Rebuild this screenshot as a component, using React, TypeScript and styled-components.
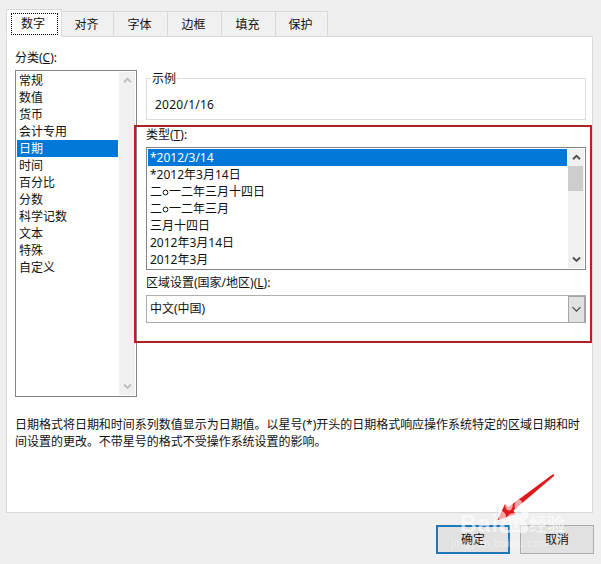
import React from "react";
import styled, { createGlobalStyle, css } from "styled-components";

const GlobalStyle = createGlobalStyle`
  * { box-sizing: border-box; }
  body {
    margin: 0;
    background: #efefef;
    color: #111;
    font: 12px/17px "Noto Sans", "Noto Sans CJK SC", sans-serif;
    white-space: nowrap;
  }
`;

const Dialog = styled.main`
  position: relative;
  width: 601px;
  height: 564px;
  padding: 9px 0 0 6px;
  overflow: hidden;
  background: #efefef;
`;

const TabBar = styled.nav`
  display: flex;
  align-items: flex-end;
  height: 28px;
`;

const Tab = styled.div<{ $active?: boolean; $width: number }>`
  display: flex;
  align-items: center;
  justify-content: center;
  width: ${(p) => p.$width}px;
  height: 26px;
  padding-right: 2px;
  border: 1px solid #d9d9d9;
  border-left: 0;
  background: #f0f0f0;
  ${(p) =>
    p.$active &&
    css`
      height: 28px;
      padding: 3px 3px 2px;
      border-left: 1px solid #d9d9d9;
      border-bottom-color: #fff;
      background: #fff;
      z-index: 1;
    `}
`;

const FocusRing = styled.span`
  display: flex;
  align-items: center;
  justify-content: center;
  width: 47px;
  height: 22px;
  padding-right: 2px;
  border: 1px dotted #000;
`;

const Page = styled.section`
  width: 587px;
  height: 477px;
  margin-top: -1px;
  padding: 12px 6px 0 8px;
  border: 1px solid #d9d9d9;
  background: #fff;
`;

const Columns = styled.div`
  display: flex;
  gap: 9px;
`;

const CategoryColumn = styled.div`
  width: 122px;
`;

const DetailColumn = styled.div`
  width: 440px;
  padding-top: 21px;
`;

const Label = styled.div<{ $height: number; $top?: number }>`
  height: ${(p) => p.$height}px;
  padding-top: ${(p) => p.$top ?? 0}px;
`;

const ListBox = styled.div<{ $height: number }>`
  display: flex;
  height: ${(p) => p.$height}px;
  padding: 1px;
  border: 1px solid #7f858b;
  background: #fff;
`;

const Options = styled.div`
  flex: 1;
  margin-right: 1px;
`;

const Option = styled.div<{ $selected?: boolean }>`
  height: 17px;
  padding-left: 2px;
  line-height: 17px;
  ${(p) => p.$selected && "background: #0078d7; color: #fff;"}
`;

const ScrollBar = styled.div`
  display: flex;
  flex-direction: column;
  width: 16px;
  background: #f0f0f0;
`;

const ScrollButton = styled.span`
  display: flex;
  align-items: center;
  justify-content: center;
  height: 17px;
`;

const Track = styled.div`
  flex: 1;
`;

const Thumb = styled.div`
  width: 15px;
  height: 25px;
  background: #cdcdcd;
`;

const SampleBox = styled.fieldset`
  height: 50px;
  margin: 0 0 6px;
  padding: 9px 8px 0;
  min-width: 0;
  border: 1px solid #dcdcdc;
  legend {
    height: 17px;
    margin-left: -4px;
    padding: 0 1px;
  }
`;

const SampleValue = styled.span`
  letter-spacing: 0.25px;
`;

const Combo = styled.div`
  display: flex;
  align-items: center;
  justify-content: space-between;
  height: 28px;
  padding-left: 3px;
  border: 1px solid #adadad;
`;

const ComboText = styled.span`
  padding-bottom: 1px;
`;

const ComboButton = styled.span`
  display: flex;
  align-items: center;
  justify-content: center;
  width: 18px;
  height: 27px;
  margin-right: -1px;
  border: 1px solid #a6a6a6;
  border-right-width: 2px;
  background: #e1e1e1;
`;

const Description = styled.p`
  margin: 19px 0 0;
  letter-spacing: -0.02px;
`;

const Footer = styled.footer`
  display: flex;
  justify-content: flex-end;
  gap: 10px;
  padding: 12px 7px 0 0;
`;

const Button = styled.button<{ $primary?: boolean }>`
  width: 74px;
  height: 29px;
  padding: 0;
  border: ${(p) => (p.$primary ? "2px solid #1b78b9" : "1px solid #adadad")};
  background: #e1e1e1;
  color: #111;
  font: inherit;
`;

const Highlight = styled.div`
  position: absolute;
  left: 134px;
  top: 125px;
  width: 458px;
  height: 218px;
  border: 2px solid #c91a1d;
  border-top-color: #b32023;
  border-bottom-color: #b32023;
`;

const Overlay = styled.svg`
  position: absolute;
  left: 440px;
  top: 465px;
  pointer-events: none;
`;

const BrandText = styled.text`
  font-family: "Liberation Sans", sans-serif;
  font-weight: 700;
  font-size: 23px;
`;

const BrandCjk = styled.text`
  font-family: "Noto Sans CJK SC", sans-serif;
  font-weight: 500;
  font-size: 18px;
`;

const BrandUrl = styled.text`
  font-family: "Liberation Sans", sans-serif;
  font-size: 11.5px;
`;

const Chevron = ({ up, color, thin }: { up?: boolean; color: string; thin?: boolean }) => (
  <svg width="9" height="7" viewBox="0 0 9 7" fill="none">
    <path
      d={up ? "M1 5.2 4.5 1.9 8 5.2" : thin ? "M.5 1.2 4.5 5.2 8.5 1.2" : "M1 1.5 4.5 5 8 1.5"}
      stroke={color}
      strokeWidth={thin ? 1.1 : 1.9}
    />
  </svg>
);

const Scroller = ({ color, thumb }: { color: string; thumb?: boolean }) => (
  <ScrollBar>
    <ScrollButton><Chevron up color={color} /></ScrollButton>
    <Track>{thumb && <Thumb />}</Track>
    <ScrollButton><Chevron color={color} /></ScrollButton>
  </ScrollBar>
);

const tabs: [string, number][] = [
  ["对齐", 52], ["字体", 54], ["边框", 54], ["填充", 54], ["保护", 52],
];
const categories = [
  "常规", "数值", "货币", "会计专用", "日期", "时间",
  "百分比", "分数", "科学记数", "文本", "特殊", "自定义",
];
const formats = [
  "*2012/3/14", "*2012年3月14日", "二○一二年三月十四日", "二○一二年三月",
  "三月十四日", "2012年3月14日", "2012年3月",
];

const Circle = styled.svg`
  display: inline-block;
  width: 7px;
  height: 12px;
  vertical-align: -2px;
`;

const FormatText = ({ text }: { text: string }) => (
  <span>
    {text.split("○").map((part, i) => (
      <React.Fragment key={i}>
        {i > 0 && (
          <Circle viewBox="0 0 7 12" aria-label="○">
            <circle cx="3.5" cy="6.5" r="2.4" fill="none" stroke="currentColor" />
          </Circle>
        )}
        {part}
      </React.Fragment>
    ))}
  </span>
);

const Arrow = () => (
  <path
    d="M497.5 520 505 504 508.5 507 552.5 474.5Q555 473.5 554 476L513.5 510.5 515.5 514.5Z"
    fill="#e01a1c"
  />
);

const Watermark = () => (
  <g fill="#fff" opacity="0.62">
    <BrandText x="460" y="532" textLength="38">Bai</BrandText>
    <path
      fillRule="evenodd"
      d="M514 513C508 513 506 519 502 523 497 528 500 534 507 533 512 532 516 532 521 533 528 534 530 528 526 523 522 519 520 513 514 513ZM507 521H509.500V530H504.500V523.500H507ZM512 523.500H514.500V528H517.500V523.500H520V530H512Z"
    />
    <ellipse cx="502" cy="516" rx="3.800" ry="5" transform="rotate(-18 502 516)" />
    <ellipse cx="509" cy="505" rx="3.800" ry="5.500" />
    <ellipse cx="518.500" cy="505" rx="3.800" ry="5.500" transform="rotate(12 518 505)" />
    <ellipse cx="524.500" cy="515" rx="3.800" ry="5" transform="rotate(20 524 515)" />
    <BrandCjk x="529" y="531">经验</BrandCjk>
    <g opacity="0.7">
      <BrandUrl x="451" y="547" textLength="99">jingyan.baidu.com</BrandUrl>
    </g>
  </g>
);

export default function App() {
  return (
    <>
      <GlobalStyle />
      <Dialog>
        <TabBar>
          <Tab $active $width={56}><FocusRing>数字</FocusRing></Tab>
          {tabs.map(([name, width]) => <Tab key={name} $width={width}>{name}</Tab>)}
        </TabBar>
        <Page>
          <Columns>
            <CategoryColumn>
              <Label $height={21}>分类(<u>C</u>):</Label>
              <ListBox $height={327}>
                <Options>
                  {categories.map((name) => (
                    <Option key={name} $selected={name === "日期"}>{name}</Option>
                  ))}
                </Options>
                <Scroller color="#bfbfbf" />
              </ListBox>
            </CategoryColumn>
            <DetailColumn>
              <SampleBox>
                <legend>示例</legend>
                <SampleValue>2020/1/16</SampleValue>
              </SampleBox>
              <Label $height={21}>类型(<u>T</u>):</Label>
              <ListBox $height={123}>
                <Options>
                  {formats.map((name, i) => (
                    <Option key={name} $selected={i === 0}><FormatText text={name} /></Option>
                  ))}
                </Options>
                <Scroller color="#505050" thumb />
              </ListBox>
              <Label $height={25} $top={4}>区域设置(国家/地区)(<u>L</u>):</Label>
              <Combo>
                <ComboText>中文(中国)</ComboText>
                <ComboButton><Chevron color="#444" thin /></ComboButton>
              </Combo>
            </DetailColumn>
          </Columns>
          <Description>
            日期格式将日期和时间系列数值显示为日期值。以星号(*)开头的日期格式响应操作系统特定的区域日期和时
            <br />
            间设置的更改。不带星号的格式不受操作系统设置的影响。
          </Description>
        </Page>
        <Footer>
          <Button $primary>确定</Button>
          <Button>取消</Button>
        </Footer>
        <Highlight />
        <Overlay width="161" height="99" viewBox="440 465 161 99">
          <Arrow />
          <Watermark />
        </Overlay>
      </Dialog>
    </>
  );
}
